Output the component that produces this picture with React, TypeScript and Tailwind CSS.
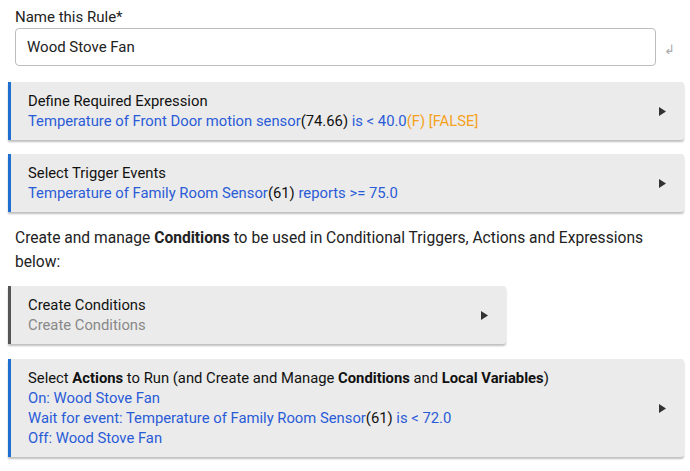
import { FC, ReactNode } from 'react'

const blue = 'text-[#2a5bd7]'
const orange = 'text-[#f5a11c]'

const Arrow = () => (
    <svg width="7" height="9" viewBox="0 0 7 9" className="shrink-0">
        <path d="M0 0 L7 4.5 L0 9 Z" fill="#333" />
    </svg>
)

const Card: FC<{ title: ReactNode; children: ReactNode; accent?: string; width?: string }> = ({
    title,
    children,
    accent = 'border-[#1f6fd0]',
    width = 'w-[676px]',
}) => (
    <div
        className={`${width} ml-2 flex items-center bg-[#ebebeb] border-l-[3px] ${accent} rounded-r-[3px] shadow-[0_2px_2px_rgba(0,0,0,0.25)] pl-[17px] pr-[18px] py-[9px]`}
    >
        <div className="flex-1 leading-[20px] text-[14.8px]">
            <div className="text-[#111]">{title}</div>
            {children}
        </div>
        <Arrow />
    </div>
)

export default function App() {
    return (
        <div className="w-[690px] h-[471px] bg-white font-['Roboto',sans-serif] text-[#222] overflow-hidden">
            <div className="pl-[15px] pt-[7px]">
                <label className="block text-[15px] leading-[20px] text-[#222]">Name this Rule*</label>
                <div className="flex items-center mt-[1px]">
                    <div className="w-[641px] h-[38px] border border-[#bdbdbd] rounded-[4px] flex items-center pl-[11px] text-[15px]">
                        Wood Stove Fan
                    </div>
                    <span className="ml-[8px] mt-[6px] text-[13px] text-[#aaa]">↲</span>
                </div>
            </div>

            <div className="mt-[16px] flex flex-col gap-[14px]">
                <Card title="Define Required Expression">
                    <div className={blue}>
                        Temperature of Front Door motion sensor<span className="text-[#111]">(74.66)</span> is &lt; 40.0
                        <span className={orange}>(F) [FALSE]</span>
                    </div>
                </Card>
                <Card title="Select Trigger Events">
                    <div className={blue}>
                        Temperature of Family Room Sensor<span className="text-[#111]">(61)</span> reports &gt;= 75.0
                    </div>
                </Card>
            </div>

            <p className="px-[15px] mt-[14px] text-[15.6px] leading-[24px] text-[#222]">
                Create and manage <b className="font-bold">Conditions</b> to be used in Conditional Triggers, Actions and
                Expressions below:
            </p>

            <div className="mt-[12px]">
                <Card title="Create Conditions" accent="border-[#555]" width="w-[498px]">
                    <div className="text-[#888]">Create Conditions</div>
                </Card>
            </div>

            <div className="mt-[15px]">
                <Card
                    title={
                        <>
                            Select <b className="font-bold">Actions</b> to Run (and Create and Manage{' '}
                            <b className="font-bold">Conditions</b> and <b className="font-bold">Local Variables</b>)
                        </>
                    }
                >
                    <div className={blue}>On: Wood Stove Fan</div>
                    <div className={blue}>
                        Wait for event: Temperature of Family Room Sensor<span className="text-[#111]">(61)</span> is
                        &lt; 72.0
                    </div>
                    <div className={blue}>Off: Wood Stove Fan</div>
                </Card>
            </div>
        </div>
    )
}
